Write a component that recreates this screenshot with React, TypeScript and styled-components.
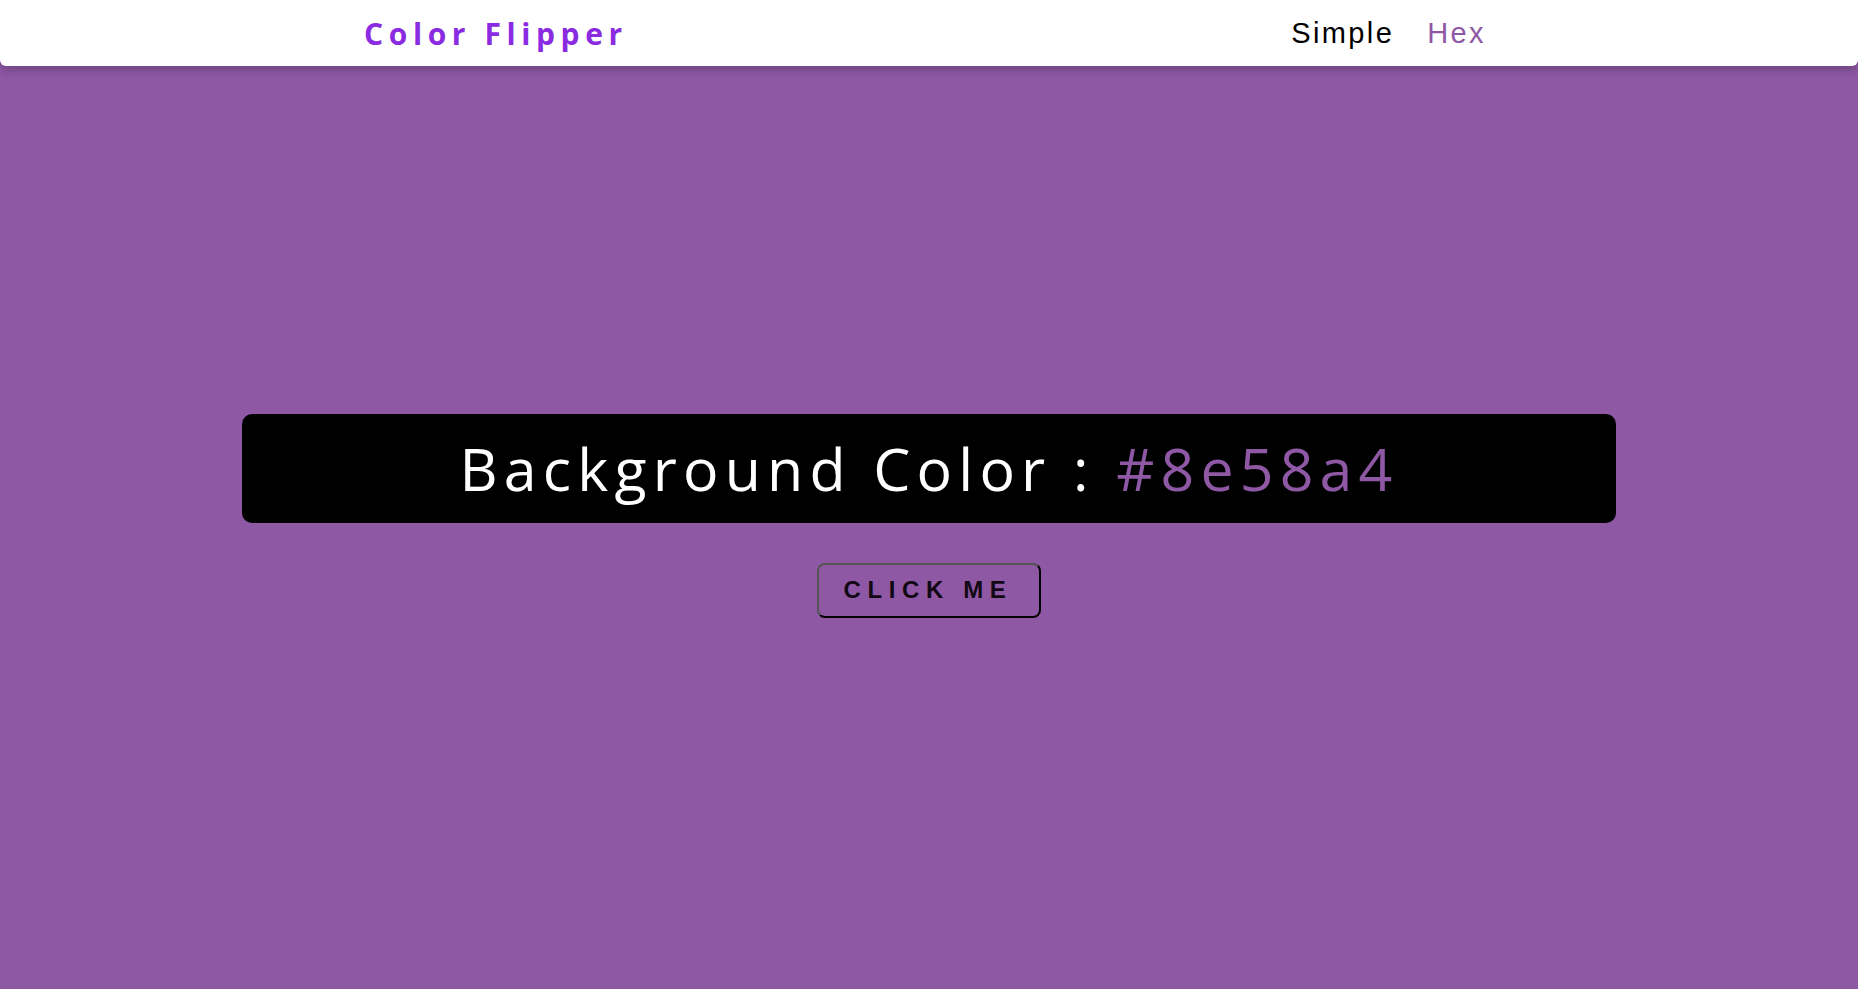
import React from "react";
import styled, { createGlobalStyle } from "styled-components";

const GlobalStyle = createGlobalStyle`
  * { box-sizing: border-box; }
  html, body { margin: 0; padding: 0; }
  body {
    background: #8e58a4;
    font-family: "Open Sans", "Noto Sans", sans-serif;
    min-height: 100vh;
  }
`;

const Nav = styled.nav`
  height: 66px;
  background: #ffffff;
  border-radius: 0 0 6px 6px;
  box-shadow: 0 4px 10px rgba(0, 0, 0, 0.22);
  display: flex;
  align-items: center;
  position: relative;
  z-index: 1;
`;

const NavCenter = styled.div`
  width: 1130px;
  margin: 0 auto;
  display: flex;
  align-items: center;
  justify-content: space-between;
`;

const Logo = styled.h4`
  margin: 0;
  font-family: "Open Sans", "Noto Sans", sans-serif;
  font-weight: 700;
  font-size: 30px;
  letter-spacing: 5.6px;
  color: #8a2be2;
`;

const Links = styled.ul`
  list-style: none;
  margin: 0;
  padding: 0 8px 0 0;
  display: flex;
  gap: 33px;
`;

const LinkItem = styled.li<{ $active?: boolean }>`
  font-family: "Liberation Sans", Arial, sans-serif;
  font-size: 29px;
  letter-spacing: 2.4px;
  color: ${(p) => (p.$active ? "#8e58a4" : "#000000")};
  cursor: pointer;
`;

const Main = styled.main`
  min-height: calc(100vh - 66px);
  display: flex;
  flex-direction: column;
  align-items: center;
  justify-content: center;
  padding-bottom: 24px;
`;

const Banner = styled.div`
  width: 74%;
  height: 109px;
  background: #000000;
  border-radius: 10px;
  display: flex;
  align-items: center;
  justify-content: center;
`;

const BannerText = styled.h2`
  margin: 0;
  font-family: "Open Sans", "Noto Sans", sans-serif;
  font-weight: 400;
  font-size: 59px;
  letter-spacing: 6.2px;
  color: #ffffff;
`;

const HexValue = styled.span`
  color: #8e58a4;
`;

const Button = styled.button`
  margin-top: 40px;
  height: 55px;
  padding: 0 27px 0 25px;
  background: transparent;
  border: 2px outset #555;
  border-radius: 8px;
  font-family: "Liberation Sans", Arial, sans-serif;
  font-weight: 700;
  font-size: 24px;
  letter-spacing: 6.6px;
  text-transform: uppercase;
  color: #120814;
  cursor: pointer;
`;

export default function App() {
  return (
    <>
      <GlobalStyle />
      <Nav>
        <NavCenter>
          <Logo>Color Flipper</Logo>
          <Links>
            <LinkItem>Simple</LinkItem>
            <LinkItem $active>Hex</LinkItem>
          </Links>
        </NavCenter>
      </Nav>
      <Main>
        <Banner>
          <BannerText>
            Background Color : <HexValue>#8e58a4</HexValue>
          </BannerText>
        </Banner>
        <Button>click me</Button>
      </Main>
    </>
  );
}
